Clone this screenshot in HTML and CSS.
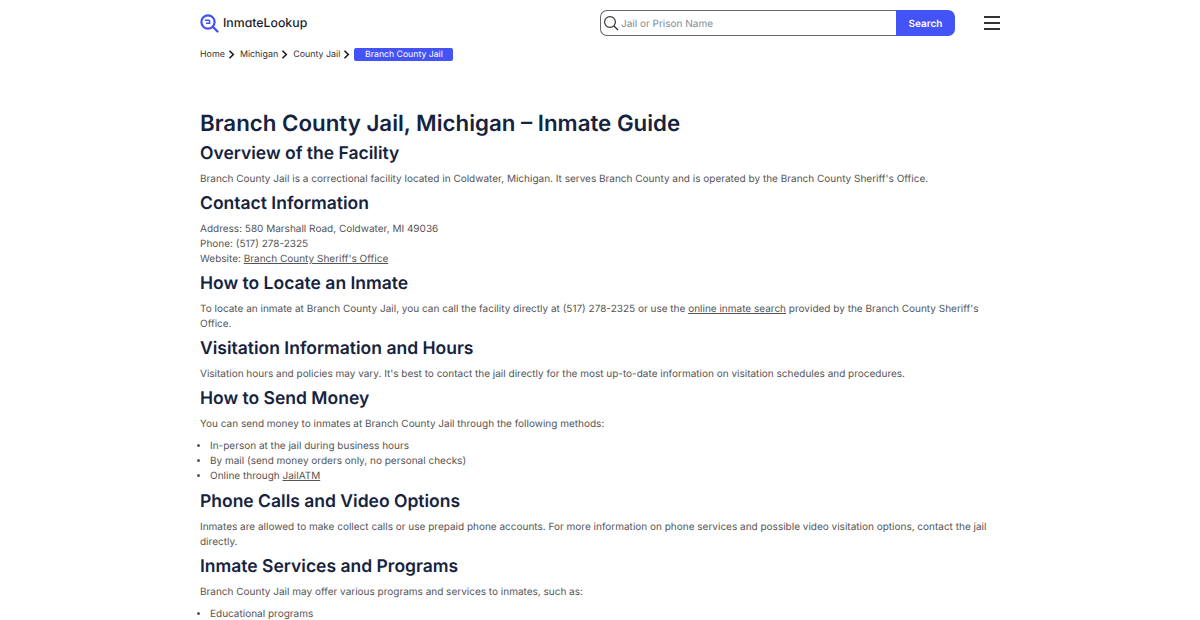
FILE: index.html
```html
<!DOCTYPE html>
<html lang="en">
<head>
    <meta charset="UTF-8">
    <title>Branch County Jail, Michigan - Inmate Guide</title>
    <link rel="stylesheet" href="styles.css">
</head>
<body>
    <header class="topbar">
        <a class="logo" href="#">
            <svg class="logo-icon" width="19" height="19" viewBox="0 0 19 19" fill="none">
                <circle cx="8" cy="8" r="6.6" stroke="#4353f5" stroke-width="2.2"/>
                <path d="M4.8 6.3h4.8M6 9.3h3.6v-3" stroke="#4353f5" stroke-width="1.5"/>
                <path d="M13 13l4.5 4.5" stroke="#4353f5" stroke-width="2.4" stroke-linecap="round"/>
            </svg>
            <span>InmateLookup</span>
        </a>
        <form class="search">
            <div class="search-box">
                <svg width="16" height="16" viewBox="0 0 16 16" fill="none">
                    <circle cx="7" cy="7" r="5.4" stroke="#333" stroke-width="1.2"/>
                    <path d="M11 11l4 4" stroke="#333" stroke-width="1.2"/>
                </svg>
                <span class="placeholder">Jail or Prison Name</span>
            </div>
            <button type="button">Search</button>
        </form>
        <div class="burger"><i></i><i></i><i></i></div>
    </header>

    <nav class="crumbs">
        <a href="#">Home</a>
        <svg class="chev" width="7" height="9" viewBox="0 0 7 9" fill="none"><path d="M1.5 .8L5.3 4.5 1.5 8.2" stroke="#1a1a1a" stroke-width="1.6"/></svg>
        <a href="#">Michigan</a>
        <svg class="chev" width="7" height="9" viewBox="0 0 7 9" fill="none"><path d="M1.5 .8L5.3 4.5 1.5 8.2" stroke="#1a1a1a" stroke-width="1.6"/></svg>
        <a href="#">County Jail</a>
        <svg class="chev" width="7" height="9" viewBox="0 0 7 9" fill="none"><path d="M1.5 .8L5.3 4.5 1.5 8.2" stroke="#1a1a1a" stroke-width="1.6"/></svg>
        <span class="current">Branch County Jail</span>
    </nav>

    <main class="guide">
        <h1>Branch County Jail, Michigan – Inmate Guide</h1>

        <h2>Overview of the Facility</h2>
        <p>Branch County Jail is a correctional facility located in Coldwater, Michigan. It serves Branch County and is operated by the Branch County Sheriff's Office.</p>

        <h2>Contact Information</h2>
        <p>Address: 580 Marshall Road, Coldwater, MI 49036<br>
        Phone: (517) 278-2325<br>
        Website: <a href="#">Branch County Sheriff's Office</a></p>

        <h2>How to Locate an Inmate</h2>
        <p>To locate an inmate at Branch County Jail, you can call the facility directly at (517) 278-2325 or use the <a href="#">online inmate search</a> provided by the Branch County Sheriff's Office.</p>

        <h2>Visitation Information and Hours</h2>
        <p>Visitation hours and policies may vary. It's best to contact the jail directly for the most up-to-date information on visitation schedules and procedures.</p>

        <h2>How to Send Money</h2>
        <p>You can send money to inmates at Branch County Jail through the following methods:</p>
        <ul>
            <li>In-person at the jail during business hours</li>
            <li>By mail (send money orders only, no personal checks)</li>
            <li>Online through <a href="#">JailATM</a></li>
        </ul>

        <h2>Phone Calls and Video Options</h2>
        <p>Inmates are allowed to make collect calls or use prepaid phone accounts. For more information on phone services and possible video visitation options, contact the jail directly.</p>

        <h2>Inmate Services and Programs</h2>
        <p>Branch County Jail may offer various programs and services to inmates, such as:</p>
        <ul>
            <li>Educational programs</li>
        </ul>
    </main>
</body>
</html>
```

FILE: styles.css
```css
body {
    margin: 0;
    font-family: Inter, "Liberation Sans", sans-serif;
    font-size: 10px;
    color: #555;
    background: #fff;
    text-rendering: geometricPrecision;
}

a {
    color: inherit;
}

.topbar {
    width: 800px;
    margin: 0 auto;
    padding-top: 10px;
    display: flex;
    align-items: center;
    height: 26px;
}

.logo {
    display: flex;
    align-items: center;
    gap: 4px;
    width: 400px;
    font-size: 12.3px;
    font-weight: 500;
    font-feature-settings: "cv11";
    color: #1c1c28;
    text-decoration: none;
}

.logo span {
    margin-top: -1px;
}

.search {
    display: flex;
    width: 355px;
    height: 26px;
}

.search-box {
    flex: 1;
    display: flex;
    align-items: center;
    gap: 2px;
    padding-left: 2px;
    border: 1px solid #666;
    border-right: none;
    border-radius: 7px 0 0 7px;
}

.placeholder {
    color: #858b95;
    padding-top: 1px;
}

.search button {
    width: 59px;
    border: none;
    padding: 1px 0 0;
    background: #4353f5;
    color: #fff;
    font: 600 10px Inter, sans-serif;
    text-rendering: geometricPrecision;
    border-radius: 0 7px 7px 0;
}

.burger {
    margin-left: auto;
    width: 16px;
    display: flex;
    flex-direction: column;
    gap: 4px;
}

.burger i {
    display: block;
    height: 2px;
    background: #333;
}

.crumbs {
    width: 800px;
    margin: 0 auto;
    padding-top: 12px;
    display: flex;
    align-items: center;
    font-size: 8.9px;
    color: #333;
    gap: 3px;
}

.chev {
    margin-right: 2px;
}

.crumbs a {
    text-decoration: none;
}

.current {
    margin-left: -1px;
    width: 99px;
    padding-top: 2px;
    text-align: center;
    font-size: 8.7px;
    background: #4353f5;
    color: #fff;
    border-radius: 2px;
    line-height: 11px;
}

.guide {
    width: 800px;
    margin: 0 auto;
    padding-top: 45px;
}

h1, h2 {
    margin: 0;
    font-family: Inter, sans-serif;
    color: #16233f;
    font-weight: 600;
}

h1 {
    font-size: 22.3px;
    line-height: 35px;
}

h2 {
    font-size: 17.5px;
    line-height: 25px;
}

p {
    margin: 0;
    padding: 6px 0 4px;
    line-height: 15px;
}

ul {
    margin: 0;
    padding: 3px 0 5px 10px;
    line-height: 15px;
}
```
